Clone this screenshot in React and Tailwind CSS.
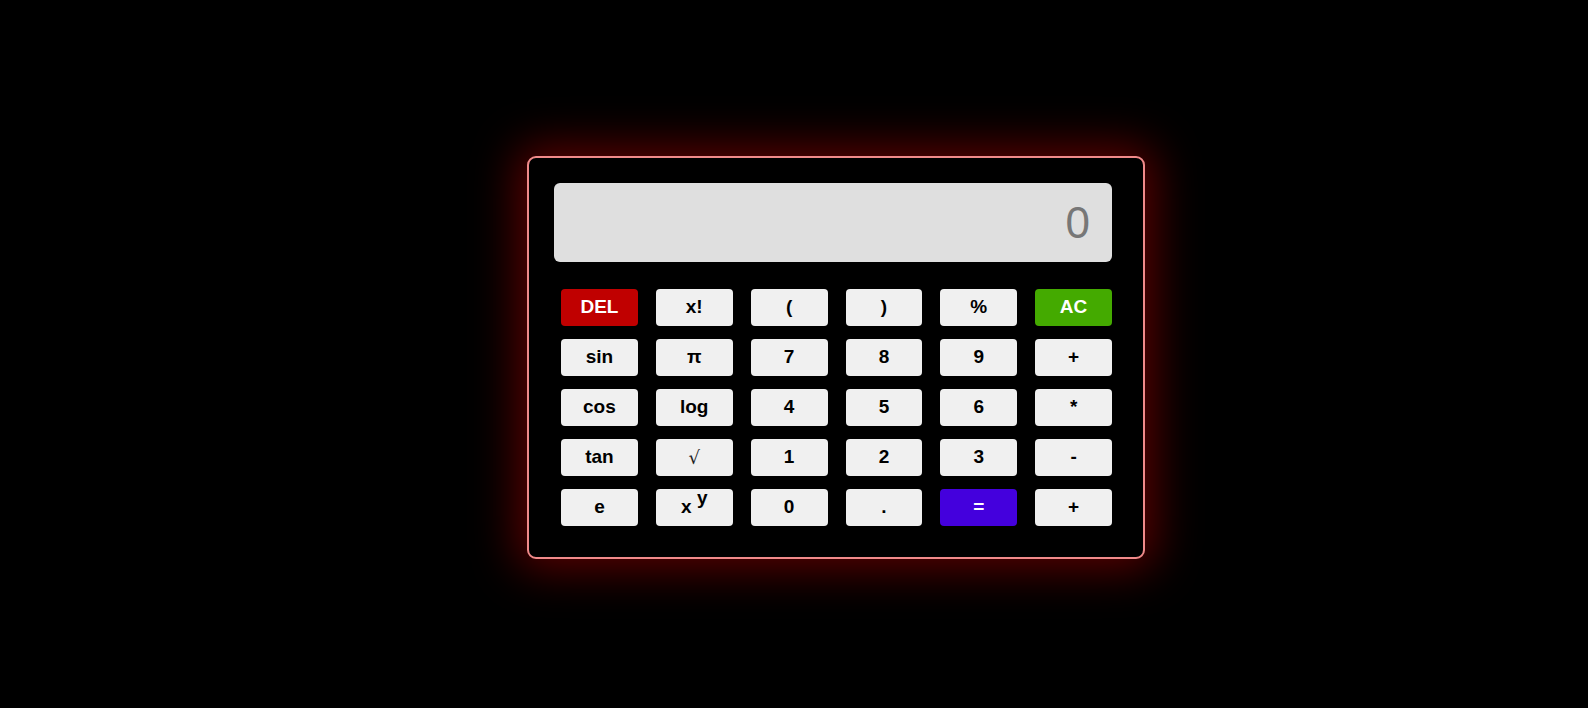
import React, { useState } from "react";

const rows = [
  ["DEL", "x!", "(", ")", "%", "AC"],
  ["sin", "π", "7", "8", "9", "+"],
  ["cos", "log", "4", "5", "6", "*"],
  ["tan", "√", "1", "2", "3", "-"],
  ["e", "xy", "0", ".", "=", "+"],
];

function keyClass(k) {
  if (k === "DEL") return "bg-[#c00000] text-white";
  if (k === "AC") return "bg-[#44aa00] text-white";
  if (k === "=") return "bg-[#4400dd] text-white";
  return "bg-[#f0f0f0] text-black";
}

export default function App() {
  const [display] = useState("0");

  return (
    <div className="w-full h-[708px] bg-black flex items-center justify-center pl-[84px] pt-[7px]" style={{ fontFamily: '"Liberation Sans", Arial, sans-serif' }}>
      <div className="w-[618px] h-[403px] rounded-[9px] border-2 border-[#f08a8a] bg-black pl-[25px] pr-[31px] pt-[25px] shadow-[0_0_45px_10px_rgba(200,0,0,0.45)]">
        <div className="h-[79px] rounded-[6px] bg-[#dfdfdf] flex items-center justify-end pr-[22px] text-[44px] text-[#777777]">
          {display}
        </div>
        <div className="mt-[27px] ml-[7px] grid grid-cols-6 gap-x-[18px] gap-y-[13px]">
          {rows.flat().map((k, i) => (
            <button
              key={i}
              className={`h-[37px] rounded-[4px] flex items-center justify-center text-[19px] font-bold ${keyClass(k)}`}
            >
              {k === "xy" ? (
                <span>
                  x <sup className="text-[19px] -top-[9px] relative font-bold">y</sup>
                </span>
              ) : k === "√" ? (
                <span className="font-normal text-[18px] text-[#222]" style={{ fontFamily: '"DejaVu Serif", serif' }}>√</span>
              ) : (
                k
              )}
            </button>
          ))}
        </div>
      </div>
    </div>
  );
}
